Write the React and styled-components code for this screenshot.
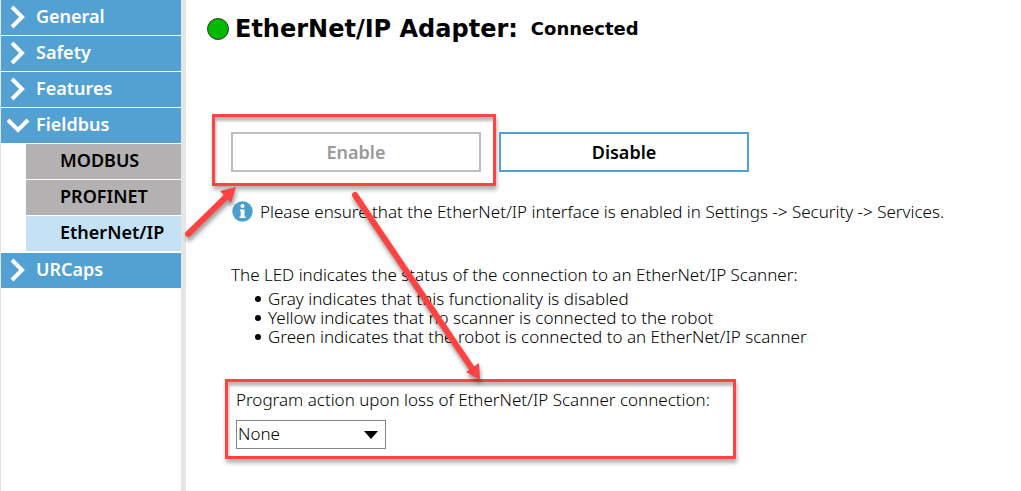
import React from "react";
import styled, { createGlobalStyle } from "styled-components";

const GlobalStyle = createGlobalStyle`
  * { box-sizing: border-box; }
  body {
    margin: 0;
    background: #fff;
    color: #000;
    font: 300 17px/19px "Noto Sans", "Open Sans", sans-serif;
  }
`;

const Page = styled.div`
  position: relative;
  display: flex;
  min-height: 100vh;
`;

const Sidebar = styled.nav`
  flex: 0 0 186px;
  border-left: 1px solid #e5e5e5;
  border-right: 5px solid #e5e5e5;
`;

const NavItem = styled.button`
  display: flex;
  align-items: center;
  gap: 5px;
  width: 100%;
  height: 36px;
  padding: 0 0 3px 4px;
  border: 0;
  border-bottom: 1px solid #fff;
  background: #53a1d3;
  color: #fff;
  font: 600 18px/24px "Noto Sans", "Open Sans", sans-serif;
  text-align: left;
`;

const Chevron = styled.svg`
  flex: none;
  width: 26px;
  height: 24px;
  margin-top: 2px;
  fill: none;
  stroke: #fff;
  stroke-width: 4;
`;

const SubNav = styled.div`
  padding: 0 0 1px 25px;
`;

const SubItem = styled.button`
  display: block;
  width: 100%;
  height: 36px;
  padding: 0 0 3px 34px;
  border: 0;
  border-bottom: 1px solid #fff;
  background: ${(p) => (p.$active ? "#c5e1f4" : "#b3b1b1")};
  color: #000;
  font: 600 18px/24px "Noto Sans", "Open Sans", sans-serif;
  text-align: left;
`;

const Main = styled.main`
  flex: 1;
  min-width: 0;
  padding: 14px 20px 0 21px;
`;

const Header = styled.header`
  display: flex;
  align-items: center;
  gap: 6px;
  height: 30px;
  font-family: "DejaVu Sans", sans-serif;
`;

const Led = styled.span`
  width: 22px;
  height: 22px;
  border: 1px solid #333;
  border-radius: 50%;
  background: #00ba00;
`;

const Title = styled.h1`
  margin: 0;
  font-size: 24px;
  line-height: 30px;
  font-weight: 700;
`;

const Status = styled.strong`
  margin-left: 7px;
  font-size: 18px;
  line-height: 28px;
  font-weight: 700;
`;

const Actions = styled.div`
  display: flex;
  align-items: baseline;
  gap: 3px;
  margin: 70px 0 0 5px;
`;

const Highlight = styled.div`
  padding: ${(p) => p.$pad};
  border: 3px solid #ff4242;
  box-shadow: 1px 4px 4px rgba(0, 0, 0, 0.3), inset 1px 4px 3px rgba(0, 0, 0, 0.27);
`;

const ActionButton = styled.button`
  display: block;
  width: 250px;
  height: 40px;
  padding: 0;
  border: 2px solid #53a1d3;
  background: #fff;
  color: #000;
  font: 600 18px/24px "Noto Sans", "Open Sans", sans-serif;

  &:disabled {
    border-color: #bfbfbf;
    color: #999;
  }
`;

const Notice = styled.p`
  display: flex;
  align-items: center;
  gap: 7px;
  margin: 15px 0 0 25px;
`;

const InfoIcon = styled.svg`
  flex: none;
  width: 21px;
  height: 21px;
`;

const Description = styled.section`
  margin: 43px 0 0 24px;
`;

const Intro = styled.p`
  margin: 0 0 5px;
`;

const StatusList = styled.ul`
  margin: 0;
  padding: 0 0 0 24px;
  list-style: none;

  li {
    display: flex;
    align-items: center;
    gap: 7px;
  }

  li::before {
    content: "";
    width: 6px;
    height: 6px;
    border-radius: 50%;
    background: #000;
  }
`;

const LossPanel = styled(Highlight)`
  max-width: 511px;
  margin: 33px 0 0 18px;

  label {
    display: block;
    margin-bottom: 11px;
  }
`;

const SelectBox = styled.div`
  position: relative;
  width: 150px;

  svg {
    position: absolute;
    top: 11px;
    right: 8px;
    width: 14px;
    height: 8px;
    pointer-events: none;
  }
`;

const Select = styled.select`
  display: block;
  appearance: none;
  width: 100%;
  height: 29px;
  padding: 0 24px 2px 1px;
  border: 1px solid #858585;
  border-radius: 0;
  background: #fff;
  color: #000;
  font: inherit;
`;

const Arrows = styled.svg`
  position: absolute;
  top: 0;
  left: 0;
  width: 500px;
  height: 400px;
  pointer-events: none;
  filter: drop-shadow(1px 4px 2px rgba(0, 0, 0, 0.4));

  line {
    stroke: #ff4242;
    stroke-width: 6;
    stroke-linecap: round;
  }

  polygon {
    fill: #ff4242;
  }
`;

function NavEntry({ label, open }) {
  return (
    <NavItem type="button" aria-expanded={!!open}>
      <Chevron viewBox="0 0 26 24" aria-hidden="true">
        <path d={open ? "M3 7 L13 17 L23 7" : "M7 2 L17 12 L7 22"} />
      </Chevron>
      {label}
    </NavItem>
  );
}

export default function App() {
  return (
    <>
      <GlobalStyle />
      <Page>
        <Sidebar>
          <NavEntry label="General" />
          <NavEntry label="Safety" />
          <NavEntry label="Features" />
          <NavEntry label="Fieldbus" open />
          <SubNav>
            <SubItem type="button">MODBUS</SubItem>
            <SubItem type="button">PROFINET</SubItem>
            <SubItem type="button" $active>EtherNet/IP</SubItem>
          </SubNav>
          <NavEntry label="URCaps" />
        </Sidebar>
        <Main>
          <Header>
            <Led />
            <Title>EtherNet/IP Adapter:</Title>
            <Status>Connected</Status>
          </Header>
          <Actions>
            <Highlight $pad="15px 12px 11px 16px">
              <ActionButton type="button" disabled>Enable</ActionButton>
            </Highlight>
            <ActionButton type="button">Disable</ActionButton>
          </Actions>
          <Notice>
            <InfoIcon viewBox="0 0 21 21" aria-hidden="true">
              <circle cx="10.5" cy="10.5" r="10.2" fill="#4b9fcf" />
              <circle cx="10.5" cy="5" r="2" fill="#fff" />
              <path d="M8 8.5 H12.5 V15.5 H13.5 V17 H7.5 V15.5 H8.7 V10 H8 Z" fill="#fff" />
            </InfoIcon>
            Please ensure that the EtherNet/IP interface is enabled in Settings -&gt; Security -&gt; Services.
          </Notice>
          <Description>
            <Intro>The LED indicates the status of the connection to an EtherNet/IP Scanner:</Intro>
            <StatusList>
              <li>Gray indicates that this functionality is disabled</li>
              <li>Yellow indicates that no scanner is connected to the robot</li>
              <li>Green indicates that the robot is connected to an EtherNet/IP scanner</li>
            </StatusList>
          </Description>
          <LossPanel $pad="8px 8px 7px">
            <label htmlFor="loss-action">Program action upon loss of EtherNet/IP Scanner connection:</label>
            <SelectBox>
              <Select id="loss-action" defaultValue="None">
                <option>None</option>
              </Select>
              <svg viewBox="0 0 14 8" aria-hidden="true">
                <path d="M0 0 H14 L7 8 Z" />
              </svg>
            </SelectBox>
          </LossPanel>
        </Main>
        <Arrows viewBox="0 0 500 400" aria-hidden="true">
          <line x1="188" y1="234" x2="227" y2="196" />
          <polygon points="236,187 231,203 220,191" />
          <line x1="355" y1="195" x2="473" y2="370" />
          <polygon points="480,380 466,372 479,363" />
        </Arrows>
      </Page>
    </>
  );
}
